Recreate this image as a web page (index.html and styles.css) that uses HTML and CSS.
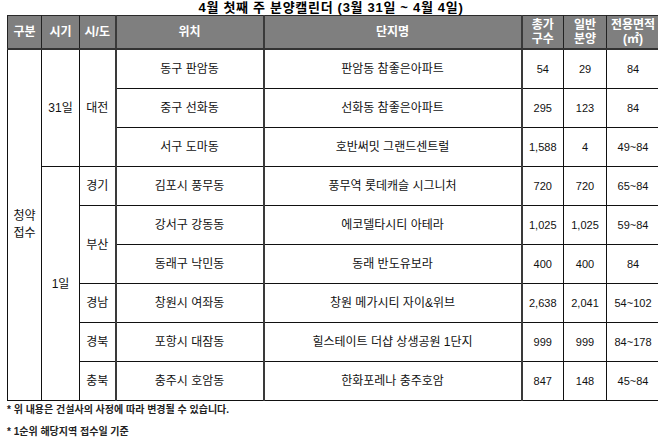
FILE: index.html
```html
<!DOCTYPE html>
<html lang="ko">
<head>
<meta charset="utf-8">
<link rel="stylesheet" href="styles.css">
</head>
<body>
<div class="page">
  <div class="title">4월 첫째 주 분양캘린더 (3월 31일 ~ 4월 4일)</div>
  <table class="cal">
    <colgroup>
      <col class="c1"><col class="c2"><col class="c3"><col class="c4"><col class="c5"><col class="c6"><col class="c7"><col class="c8">
    </colgroup>
    <thead>
      <tr>
        <th>구분</th><th>시기</th><th class="thick">시/도</th><th class="thick">위치</th><th class="thick">단지명</th>
        <th>총가<br>구수</th><th>일반<br>분양</th><th>전용면적<br>(㎡)</th>
      </tr>
    </thead>
    <tbody>
      <tr>
        <td rowspan="9" class="gubun">청약<br>접수</td>
        <td rowspan="3">31일</td>
        <td rowspan="3" class="thick">대전</td>
        <td class="thick">동구 판암동</td>
        <td class="thick">판암동 참좋은아파트</td>
        <td class="num">54</td><td class="num">29</td><td class="num">84</td>
      </tr>
      <tr>
        <td class="thick">중구 선화동</td>
        <td class="thick">선화동 참좋은아파트</td>
        <td class="num">295</td><td class="num">123</td><td class="num">84</td>
      </tr>
      <tr>
        <td class="thick">서구 도마동</td>
        <td class="thick">호반써밋 그랜드센트럴</td>
        <td class="num">1,588</td><td class="num">4</td><td class="num">49~84</td>
      </tr>
      <tr>
        <td rowspan="6">1일</td>
        <td class="thick">경기</td>
        <td class="thick">김포시 풍무동</td>
        <td class="thick">풍무역 롯데캐슬 시그니처</td>
        <td class="num">720</td><td class="num">720</td><td class="num">65~84</td>
      </tr>
      <tr>
        <td rowspan="2" class="thick">부산</td>
        <td class="thick">강서구 강동동</td>
        <td class="thick">에코델타시티 아테라</td>
        <td class="num">1,025</td><td class="num">1,025</td><td class="num">59~84</td>
      </tr>
      <tr>
        <td class="thick">동래구 낙민동</td>
        <td class="thick">동래 반도유보라</td>
        <td class="num">400</td><td class="num">400</td><td class="num">84</td>
      </tr>
      <tr>
        <td class="thick">경남</td>
        <td class="thick">창원시 여좌동</td>
        <td class="thick">창원 메가시티 자이&amp;위브</td>
        <td class="num">2,638</td><td class="num">2,041</td><td class="num">54~102</td>
      </tr>
      <tr>
        <td class="thick">경북</td>
        <td class="thick">포항시 대잠동</td>
        <td class="thick">힐스테이트 더샵 상생공원 1단지</td>
        <td class="num">999</td><td class="num">999</td><td class="num">84~178</td>
      </tr>
      <tr>
        <td class="thick">충북</td>
        <td class="thick">충주시 호암동</td>
        <td class="thick">한화포레나 충주호암</td>
        <td class="num">847</td><td class="num">148</td><td class="num">45~84</td>
      </tr>
    </tbody>
  </table>
  <div class="notes">
    <p class="note">* 위 내용은 건설사의 사정에 따라 변경될 수 있습니다.</p>
    <p class="note">* 1순위 해당지역 접수일 기준</p>
  </div>
</div>
</body>
</html>
```

FILE: styles.css
```css
html, body {
  margin: 0;
  padding: 0;
  background: #ffffff;
  overflow: hidden;
}
.page {
  width: 658px;
  height: 440px;
  overflow: hidden;
  font-family: "Liberation Sans", "Noto Sans CJK KR", sans-serif;
  color: #111111;
}
.title {
  height: 15px;
  line-height: 15px;
  text-align: center;
  font-weight: bold;
  font-size: 13px;
  letter-spacing: 0.7px;
  padding-left: 4px;
  color: #000000;
}
.cal {
  margin-left: 7px;
  width: 652px;
  table-layout: fixed;
  border-collapse: collapse;
}
.c1 { width: 34px; }
.c2 { width: 38px; }
.c3 { width: 36px; }
.c4 { width: 148px; }
.c5 { width: 258px; }
.c6 { width: 42px; }
.c7 { width: 43px; }
.c8 { width: 53px; }
.cal th {
  height: 32px;
  padding: 0;
  background: #7f7f7f;
  color: #ffffff;
  font-weight: bold;
  font-size: 12px;
  line-height: 14px;
  border-top: 1px solid #2a2a2a;
  border-bottom: 2px solid #333333;
  border-left: 1px solid #222222;
  border-right: 1px solid #222222;
  vertical-align: middle;
  text-align: center;
}
.cal td {
  height: 38px;
  padding: 0;
  font-size: 12px;
  line-height: 16px;
  text-align: center;
  vertical-align: middle;
  border: 1px solid #111111;
}
.cal th.thick, .cal td.thick {
  border-right: 2px solid #3a3a3a;
}
.cal td.num {
  font-size: 11px;
}
.cal td.gubun {
  line-height: 17px;
}
.notes {
  padding-left: 7px;
  padding-top: 3px;
}
.note {
  margin: 0;
  height: 22px;
  font-size: 10px;
  font-weight: bold;
  line-height: 12px;
  color: #222222;
}
```
